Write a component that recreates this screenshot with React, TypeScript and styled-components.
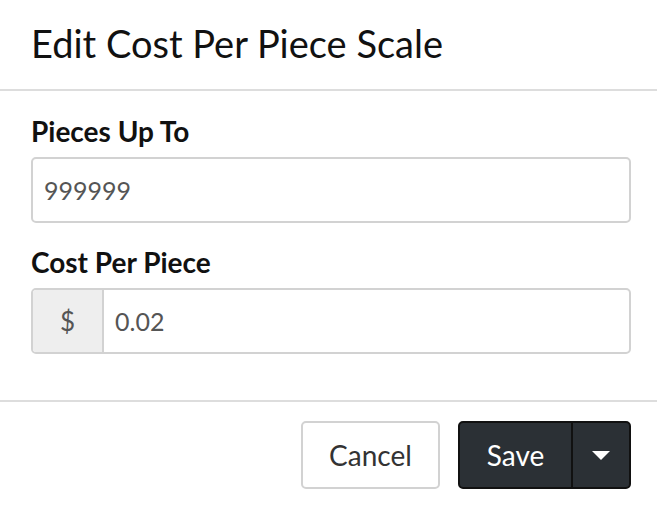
import React from "react";
import styled, { createGlobalStyle } from "styled-components";

const Global = createGlobalStyle`
  html, body { margin: 0; padding: 0; background: #fff; }
  body { font-family: Lato, "Open Sans", sans-serif; color: #111; }
  * { box-sizing: border-box; }
`;

const Modal = styled.div`
  width: 657px;
  display: flex;
  flex-direction: column;
`;

const Header = styled.div`
  height: 91px;
  display: flex;
  align-items: center;
  padding: 0 31px;
  border-bottom: 2px solid #dddddd;
`;

const Title = styled.h4`
  margin: 0;
  font-size: 38px;
  font-weight: 400;
  color: #111;
  line-height: 1.2;
  padding-bottom: 2px;
`;

const Body = styled.div`
  padding: 22px 26px 46px 31px;
  display: flex;
  flex-direction: column;
`;

const Field = styled.div<{ $last?: boolean }>`
  display: flex;
  flex-direction: column;
  margin-bottom: ${(p) => (p.$last ? 0 : 21)}px;
`;

const Label = styled.label`
  font-size: 28px;
  font-weight: 700;
  line-height: 36px;
  color: #111;
  margin-bottom: 8px;
`;

const InputBox = styled.div`
  height: 66px;
  display: flex;
  border: 2px solid #d2d2d2;
  border-radius: 5px;
  overflow: hidden;
`;

const Addon = styled.div`
  width: 71px;
  flex: none;
  display: flex;
  align-items: center;
  justify-content: center;
  background: #eeeeee;
  border-right: 2px solid #d2d2d2;
  color: #555;
  font-size: 26px;
`;

const Value = styled.div`
  flex: 1;
  display: flex;
  align-items: center;
  padding: 0 11px;
  font-size: 25px;
  color: #555;
`;

const Footer = styled.div`
  border-top: 2px solid #dddddd;
  padding: 19px 26px 18px 31px;
  display: flex;
  justify-content: flex-end;
  gap: 18px;
`;

const CancelButton = styled.button`
  width: 139px;
  height: 68px;
  border: 2px solid #d2d2d2;
  border-radius: 5px;
  background: #fff;
  color: #333;
  font-family: inherit;
  font-size: 28px;
`;

const SplitGroup = styled.div`
  height: 68px;
  display: flex;
  border: 2px solid #111;
  border-radius: 5px;
  overflow: hidden;
  background: #2b3035;
`;

const SaveButton = styled.button`
  width: 113px;
  border: none;
  border-right: 2px solid #111;
  background: transparent;
  color: #fff;
  font-family: inherit;
  font-size: 28px;
`;

const CaretButton = styled.button`
  width: 56px;
  border: none;
  background: transparent;
  display: flex;
  align-items: center;
  justify-content: center;
`;

export default function App() {
  return (
    <>
      <Global />
      <Modal>
        <Header>
          <Title>Edit Cost Per Piece Scale</Title>
        </Header>
        <Body>
          <Field>
            <Label>Pieces Up To</Label>
            <InputBox>
              <Value>999999</Value>
            </InputBox>
          </Field>
          <Field $last>
            <Label>Cost Per Piece</Label>
            <InputBox>
              <Addon>$</Addon>
              <Value>0.02</Value>
            </InputBox>
          </Field>
        </Body>
        <Footer>
          <CancelButton>Cancel</CancelButton>
          <SplitGroup>
            <SaveButton>Save</SaveButton>
            <CaretButton>
              <svg width="18" height="9" viewBox="0 0 18 9">
                <path d="M0 0 L18 0 L9 9 Z" fill="#fff" />
              </svg>
            </CaretButton>
          </SplitGroup>
        </Footer>
      </Modal>
    </>
  );
}
